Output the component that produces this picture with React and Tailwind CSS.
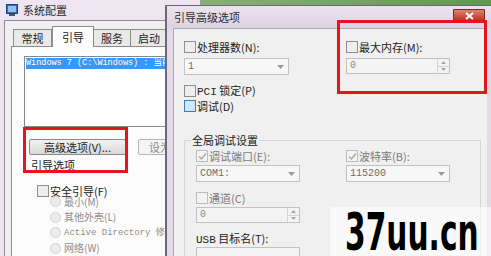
import React from 'react';

const cjk = { fontFamily: '"Noto Sans CJK SC", "Noto Sans", sans-serif' };
const mono = { fontFamily: '"Liberation Mono", "Noto Sans CJK SC", monospace' };

const Check = ({ checked, hover, disabled }) => (
  <span
    className={`inline-flex items-center justify-center w-[12px] h-[12px] border shrink-0 ${
      hover ? 'border-[#3c7fb1] bg-[#cfe8fa]' : disabled ? 'border-[#bdbdbd] bg-[#f4f4f4]' : 'border-[#8e8f8f] bg-[#eeeeee]'
    }`}
  >
    {checked && (
      <svg width="9" height="9" viewBox="0 0 9 9">
        <path d="M1 4.5 L3.5 7 L8 1.5" stroke="#a7a7a7" strokeWidth="1.4" fill="none" />
      </svg>
    )}
  </span>
);

const Radio = () => (
  <span className="inline-block w-[11px] h-[11px] rounded-full border border-[#d2d2d2] bg-[#ebebeb] shrink-0" />
);

const Dropdown = ({ value, w = 'w-[105px]' }) => (
  <div className={`${w} h-[17px] border border-[#c2c2c2] bg-[#f7f7f7] flex items-center justify-between pl-[3px] pr-[4px] text-[10px] text-[#6d6d6d]`} style={mono}>
    <span>{value}</span>
    <svg width="7" height="4" viewBox="0 0 7 4"><path d="M0 0 H7 L3.5 4 Z" fill="#9a9a9a" /></svg>
  </div>
);

const Spinner = ({ value, w = 'w-[104px]' }) => (
  <div className={`${w} h-[16px] border border-[#c2c2c2] bg-[#f4f4f4] flex items-stretch text-[10px] text-[#8a8a8a]`} style={mono}>
    <span className="flex-1 pl-[3px] leading-[14px]">{value}</span>
    <div className="w-[12px] flex flex-col border-l border-[#d6d6d6]">
      <div className="flex-1 flex items-center justify-center border-b border-[#d6d6d6]">
        <svg width="5" height="3" viewBox="0 0 5 3"><path d="M0 3 H5 L2.5 0 Z" fill="#a6a6a6" /></svg>
      </div>
      <div className="flex-1 flex items-center justify-center">
        <svg width="5" height="3" viewBox="0 0 5 3"><path d="M0 0 H5 L2.5 3 Z" fill="#a6a6a6" /></svg>
      </div>
    </div>
  </div>
);

const Label = ({ children, gray }) => (
  <span className={`text-[11px] leading-[12px] whitespace-nowrap ${gray ? 'text-[#7a7a7a]' : 'text-[#222]'}`} style={cjk}>{children}</span>
);

function BackWindow() {
  return (
    <div className="absolute left-0 top-0 w-[200px] h-[256px] bg-[#ede6f0]">
      <div className="h-[20px] flex items-center pl-[6px] gap-[5px]">
        <svg width="12" height="12" viewBox="0 0 12 12">
          <rect x="0.5" y="0.5" width="11" height="9" fill="#3b6fb6" stroke="#1d3f78" />
          <rect x="2" y="2" width="8" height="6" fill="#8fc0f0" />
          <rect x="3" y="10" width="6" height="2" fill="#555" />
        </svg>
        <span className="text-[11px] text-[#2a2a2a]" style={cjk}>系统配置</span>
      </div>
      <div className="ml-[4px] h-[236px] border-l border-t border-[#8d8a93] bg-[#f0f0f0] pt-[5px] pl-[6px]">
        <div className="flex items-end h-[20px] ml-[2px]">
          <div className="w-[39px] h-[17px] border border-b-0 border-[#8c8c8c] bg-[#e9e9e9] flex items-center justify-center text-[11px] text-[#222]" style={cjk}>常规</div>
          <div className="w-[42px] h-[21px] border border-b-0 border-[#8c8c8c] bg-[#fcfcfc] flex items-center justify-center text-[11px] text-[#222] relative top-[1px]" style={cjk}>引导</div>
          <div className="w-[37px] h-[17px] border border-b-0 border-l-0 border-[#8c8c8c] bg-[#e9e9e9] flex items-center justify-center text-[11px] text-[#222]" style={cjk}>服务</div>
          <div className="w-[37px] h-[17px] border border-b-0 border-l-0 border-[#8c8c8c] bg-[#e9e9e9] flex items-center justify-center text-[11px] text-[#222]" style={cjk}>启动</div>
        </div>
        <div className="h-[211px] border-l border-t border-[#8c8c8c] bg-[#fbfbfb] pl-[12px] pt-[9px]">
          <div className="h-[71px] border border-[#828790] bg-white pt-[1px] pl-[1px]">
            <div className="h-[11px] bg-[#3399ff] text-white text-[8.5px] leading-[11px] whitespace-nowrap overflow-hidden" style={mono}>
              Windows 7 (C:\Windows) : 当前
            </div>
          </div>
          <div className="flex items-center mt-[12px] ml-[5px] gap-[12px]">
            <div className="w-[97px] h-[16px] border border-[#8a8a8a] rounded-[2px] bg-gradient-to-b from-[#f2f2f2] to-[#d9d9d9] flex items-center justify-center text-[11px] text-[#222]" style={cjk}>
              高级选项(V)...
            </div>
            <div className="w-[40px] h-[16px] border border-[#b5b5b5] rounded-[2px] bg-[#f4f4f4] pl-[10px] text-[11px] leading-[14px] text-[#8a8a8a] whitespace-nowrap overflow-hidden" style={cjk}>
              设为
            </div>
          </div>
          <div className="mt-[4px] ml-[7px] text-[11px] leading-[13px] text-[#222]" style={cjk}>引导选项</div>
          <div className="mt-[13px] ml-[13px] flex items-center gap-[1px]">
            <Check />
            <Label>安全引导(F)</Label>
          </div>
          <div className="ml-[26px] -mt-[3px] flex flex-col">
            {['最小(M)', '其他外壳(L)', 'Active Directory 修复', '网络(W)'].map((t) => (
              <div key={t} className="h-[15.5px] flex items-center gap-[3px] whitespace-nowrap">
                <Radio />
                <span
                  className={`${t.startsWith('Active') ? 'text-[9px]' : 'text-[10px]'} leading-[12px] text-[#8d8d8d]`}
                  style={t.startsWith('Active') ? mono : cjk}
                >
                  {t}
                </span>
              </div>
            ))}
          </div>
        </div>
      </div>
      <div className="absolute left-[23px] top-[127px] w-[105px] h-[46px] border-[3px] border-[#e8141b]" />
    </div>
  );
}

function Dialog() {
  return (
    <div className="absolute left-[165px] top-[5px] w-[326px] h-[251px] border-l-2 border-t border-[#6d6676] bg-[#e3d9e7]">
      <div className="h-[22px] flex items-center pl-[7px] bg-gradient-to-b from-[#ebe3ee] to-[#ddd2e2]">
        <span className="text-[11px] text-[#2b2b2b]" style={cjk}>引导高级选项</span>
      </div>
      <div className="absolute right-[6px] top-[3px] w-[32px] h-[13px] rounded-b-[3px] bg-gradient-to-b from-[#e0806f] to-[#b8281b] border border-[#7a2a22] flex items-center justify-center">
        <svg width="9" height="8" viewBox="0 0 9 8"><path d="M1 1 L8 7 M8 1 L1 7" stroke="white" strokeWidth="2" /></svg>
      </div>
      <div className="ml-[6px] mr-[4px] h-[228px] border-l border-t border-[#b1a7b6] bg-[#f0f0f0] pl-[10px] pt-[12px]">
        <div className="flex">
          <div className="w-[162px]">
            <div className="flex items-center gap-[1px] h-[12px]"><Check /><Label>处理器数(N):</Label></div>
            <div className="mt-[5px]"><Dropdown value="1" /></div>
            <div className="mt-[10px] flex items-center gap-[1px] h-[12px]"><Check /><Label><span style={mono}>PCI</span> 锁定(P)</Label></div>
            <div className="mt-[3px] flex items-center gap-[1px] h-[12px]"><Check hover /><Label>调试(D)</Label></div>
          </div>
          <div>
            <div className="flex items-center gap-[1px] h-[12px]"><Check /><Label>最大内存(M):</Label></div>
            <div className="mt-[5px]"><Spinner value="0" /></div>
          </div>
        </div>
        <div className="relative mt-[28px] w-[297px] h-[200px] border-t border-l border-r border-[#d6d6d6]">
          <span className="absolute left-[6px] top-[-8px] bg-[#f0f0f0] px-[1px] text-[11px] leading-[14px] text-[#222]" style={cjk}>全局调试设置</span>
          <div className="flex pl-[11px] pt-[9px]">
            <div className="w-[150px]">
              <div className="flex items-center gap-[1px] h-[12px]"><Check checked disabled /><Label gray>调试端口(E):</Label></div>
              <div className="mt-[3px]"><Dropdown value="COM1:" w="w-[104px]" /></div>
              <div className="mt-[10px] flex items-center gap-[1px] h-[12px]"><Check disabled /><Label gray>通道(C)</Label></div>
              <div className="mt-[3px]"><Spinner value="0" /></div>
              <div className="mt-[10px] h-[12px] flex items-center"><Label><span style={mono}>USB</span> 目标名(T):</Label></div>
              <div className="mt-[2px] w-[104px] h-[16px] border border-[#c2c2c2] bg-[#f4f4f4]" />
            </div>
            <div>
              <div className="flex items-center gap-[1px] h-[12px]"><Check checked disabled /><Label gray>波特率(B):</Label></div>
              <div className="mt-[3px]"><Dropdown value="115200" w="w-[104px]" /></div>
            </div>
          </div>
        </div>
      </div>
      <div className="absolute left-[170px] top-[14px] w-[150px] h-[74px] border-[3px] border-[#e8141b]" />
    </div>
  );
}

export default function App() {
  return (
    <div className="relative w-[491px] h-[256px] overflow-hidden bg-[#ede6f0]">
      <div className="absolute left-[168px] top-0 w-[323px] h-[6px] bg-gradient-to-r from-[#8fb27a] to-[#5f9a4c]" />
      <BackWindow />
      <Dialog />
      <div className="absolute left-[330px] top-[207px] w-[161px] h-[49px] bg-white/60 pl-[15px] flex items-center">
        <span
          className="block scale-y-[1.58] text-[33px] leading-[33px] font-bold text-black whitespace-nowrap"
          style={{ fontFamily: '"DejaVu Sans Condensed", "DejaVu Sans", sans-serif' }}
        >
          37uu.cn
        </span>
      </div>
    </div>
  );
}
